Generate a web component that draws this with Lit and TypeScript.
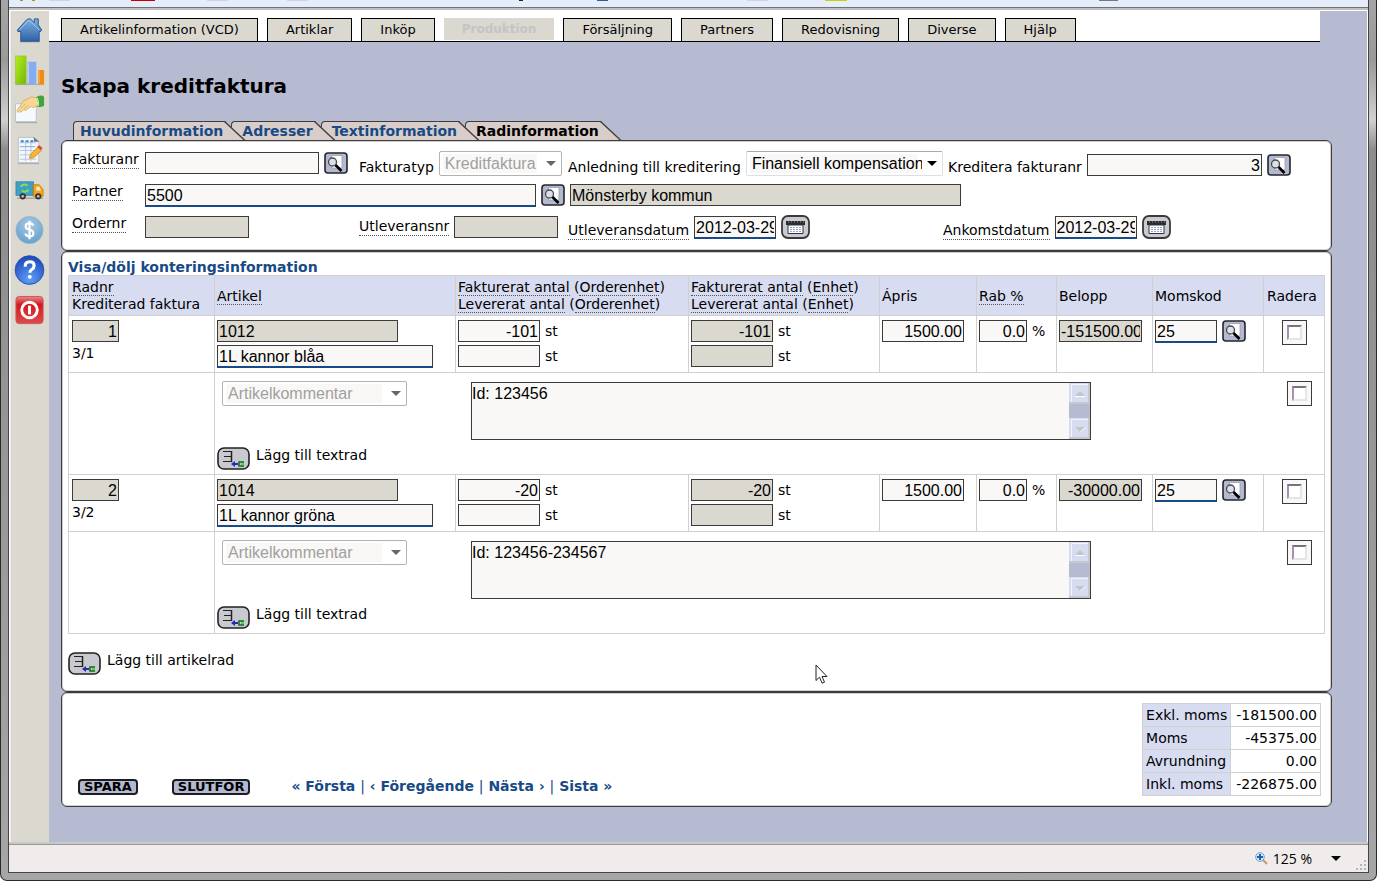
import { LitElement, html, svg, css, nothing } from "lit";
import { customElement, property } from "lit/decorators.js";

interface InvoiceRow {
  nr: string;
  ref: string;
  article: string;
  name: string;
  qty: string;
  price: string;
  discount: string;
  amount: string;
  vat: string;
  comment: string;
}

const ROWS: InvoiceRow[] = [
  { nr: "1", ref: "3/1", article: "1012", name: "1L kannor blåa", qty: "-101", price: "1500.00", discount: "0.0", amount: "-151500.00", vat: "25", comment: "Id: 123456" },
  { nr: "2", ref: "3/2", article: "1014", name: "1L kannor gröna", qty: "-20", price: "1500.00", discount: "0.0", amount: "-30000.00", vat: "25", comment: "Id: 123456-234567" },
];

const MENU = ["Artikelinformation (VCD)", "Artiklar", "Inköp", "Produktion", "Försäljning", "Partners", "Redovisning", "Diverse", "Hjälp"];
const TABS = ["Huvudinformation", "Adresser", "Textinformation", "Radinformation"];
const TOTALS = [
  ["Exkl. moms", "-181500.00"],
  ["Moms", "-45375.00"],
  ["Avrundning", "0.00"],
  ["Inkl. moms", "-226875.00"],
];

const SIDE_ICONS = [
  { label: "Hem", art: svg`
    <defs><linearGradient id="g" x1="0" y1="0" x2="0" y2="1"><stop offset="0" stop-color="#7fb0e0"/><stop offset="1" stop-color="#2f62a8"/></linearGradient></defs>
    <path d="M6 27.500h21" stroke="#a9a79f" stroke-width="1.500"/>
    <path d="M21 4h4v6l3.500 5.500-1 1.500H26v10H7V17H4l-.5-1.500L13 5l2-1h2l4 4z" fill="url(#g)" stroke="#265693" stroke-width="1"/>
    <path d="M5.500 15.500L14.500 6h2l9.500 9.500" fill="none" stroke="#a5cbee" stroke-width="1"/>` },
  { label: "Statistik", art: svg`
    <defs><linearGradient id="g" x1="0" y1="0" x2="1" y2="1"><stop offset="0" stop-color="#b4ee1c"/><stop offset="1" stop-color="#76b50c"/></linearGradient></defs>
    <path d="M2 30.500h29" stroke="#a9a79f"/>
    <rect x="1.500" y="1" width="11" height="29" fill="url(#g)" stroke="#8ac81a" stroke-width=".6"/>
    <rect x="14" y="7" width="9" height="23" fill="#86acf0"/><path d="M15 8v21" stroke="#b9d0fa"/>
    <rect x="25" y="15.500" width="6" height="14.500" fill="#f08a12"/><path d="M26 16v13" stroke="#fbb45a"/>` },
  { label: "Avtal", art: svg`
    <path d="M1.500 9h21.500v18.500H1.500z" fill="#f5f8fc" stroke="#b9c2cc"/>
    <path d="M2 28.500h22" stroke="#a3a6a6"/>
    <path d="M3 16l7-10 8-4 7 1 1 7-6 3-3-1-5 4-2-1-3 3-1-2-2 2z" fill="#f6d794" stroke="#d3a754" stroke-width=".8"/>
    <path d="M7 14l5-5M10 15l5-5" stroke="#d3a754" stroke-width=".8"/>
    <path d="M23 2q6-3 8 0v9q-3 2-7 1 2-4-1-10z" fill="#3fa53b"/><path d="M24 3q2 4 1 8.500" stroke="#d8f3d4" fill="none"/>` },
  { label: "Planering", art: svg`
    <path d="M4.500 2.500h17l4 4v22h-21z" fill="#f3f6fa" stroke="#bcc3cb"/><path d="M4 29.500h22" stroke="#a5a8a8"/>
    <path d="M20 2l6 5h-5z" fill="#666f78"/>
    <path d="M6 8h17M6 16h17M6 20.500h17M6 25h17M12 6v21M17.500 6v21" stroke="#b4c9e0"/>
    <path d="M7 6.500h15" stroke="#3f86c6" stroke-width="2" stroke-dasharray="3 2"/>
    <path d="M6 12h16" stroke="#7fabd4" stroke-width="1"/>
    <path d="M16 24l1-4 8-8 3.500 3.500-8 8z" fill="#f8b435" stroke="#c98212" stroke-width=".8"/>
    <path d="M24 12.500l2-2 3.500 3-2 2z" fill="#d9443a"/>` },
  { label: "Leverans", art: svg`
    <path d="M3 24h27" stroke="#aaa89f" stroke-width="1.500"/>
    <path d="M2 7h18v14H2z" fill="#3fa0c6" stroke="#2a7fa4" stroke-width=".8"/>
    <path d="M20 10h6l4 5v7H20z" fill="#f5a516" stroke="#c47b06" stroke-width=".8"/><path d="M23 12h3l2 4h-5z" fill="#f9ecc6"/>
    <path d="M7 12q3-4 7-1M15 15q-3 4-7 1" stroke="#86e04a" stroke-width="2" fill="none"/>
    <circle cx="9" cy="22" r="3.200" fill="#333"/><circle cx="9" cy="22" r="1.400" fill="#bbb"/>
    <circle cx="25" cy="22" r="3.200" fill="#333"/><circle cx="25" cy="22" r="1.400" fill="#bbb"/>` },
  { label: "Ekonomi", art: svg`
    <defs><radialGradient id="g" cx=".5" cy=".3" r=".8"><stop offset="0" stop-color="#a8c9e2"/><stop offset="1" stop-color="#5f9bc9"/></radialGradient></defs>
    <circle cx="16" cy="15.500" r="14" fill="url(#g)" stroke="#8db5d4" stroke-width=".8"/>
    <path d="M20 11q-1-2.500-4-2.500-4 0-4 3.200 0 2.800 4 3.500t4 3.800q0 3-4 3-3.600 0-4.300-3M16 6v19" stroke="#fff" stroke-width="2.200" fill="none"/>` },
  { label: "Hjälp", art: svg`
    <defs><radialGradient id="g" cx=".5" cy=".8" r=".8"><stop offset="0" stop-color="#5fa0f8"/><stop offset="1" stop-color="#1a45b8"/></radialGradient></defs>
    <circle cx="16" cy="15.500" r="14.800" fill="url(#g)" stroke="#2a54b0" stroke-width="1"/>
    <path d="M11.500 12q0-5 4.700-5 4.500 0 4.500 4 0 2.500-2.400 4-1.900 1.200-1.900 3.200" stroke="#fff" stroke-width="3.200" fill="none"/><circle cx="16.300" cy="22.500" r="2" fill="#fff"/>` },
  { label: "Logga ut", art: svg`
    <defs><linearGradient id="g" x1="0" y1="0" x2="0" y2="1"><stop offset="0" stop-color="#e88"/><stop offset=".3" stop-color="#cf1a20"/><stop offset="1" stop-color="#e04a4a"/></linearGradient></defs>
    <rect x="2" y="1.500" width="28" height="28" rx="3.500" fill="url(#g)" stroke="#c9555a"/>
    <circle cx="16" cy="15.500" r="8" fill="none" stroke="#fff" stroke-width="3"/><path d="M16 11v9" stroke="#fff" stroke-width="3"/>` },
];

const controls = css`
  button { padding: 0; border: 0; background: none; display: block; flex: none; cursor: pointer; font: inherit; }
  svg { display: block; }
  input, select, textarea { font: 16px/20px "Liberation Sans", Arial, sans-serif; color: #000; margin: 0; box-sizing: border-box; border-radius: 0; min-width: 0; }
  .field { height: 22px; border: 1px solid #3b3b3b; background: #f9f8f6; padding: 2px 1px 0; flex: none; }
  .field[readonly] { background: #dbd8d0; }
  .field.required { height: 23px; border-bottom: 2px solid #184a86; }
  .num { text-align: right; }
  .picker { appearance: none; height: 25px; flex: none; padding: 0 20px 0 5px; border: 1px solid #dcdfe6; border-top-color: #a8abb0; border-radius: 2px; opacity: 1;
    background: url("data:image/svg+xml,%3Csvg xmlns='http://www.w3.org/2000/svg' width='10' height='5'%3E%3Cpath d='M0 0h10L5 5z' fill='black'/%3E%3C/svg%3E") no-repeat right 5px center, linear-gradient(#f9f8f6, #f9f8f6) no-repeat 3px 2px / calc(100% - 27px) 19px, #fff; }
  .picker:disabled { color: #a0a0a0; border-color: #b2b2b2;
    background-image: url("data:image/svg+xml,%3Csvg xmlns='http://www.w3.org/2000/svg' width='10' height='5'%3E%3Cpath d='M0 0h10L5 5z' fill='%23666'/%3E%3C/svg%3E"), linear-gradient(#f9f8f6, #f9f8f6); }
  .term { border-bottom: 1px dotted #555; }
`;

@customElement("icon-button")
class IconButton extends LitElement {
  @property() kind = "search";
  @property() label = "";
  static styles = [controls, css`:host { display: block; flex: none; }`];

  private art() {
    switch (this.kind) {
      case "calendar":
        return html`<svg width="29" height="24" viewBox="0 0 29 24">
          <rect x="1" y="1" width="27" height="22" rx="6" fill="#c9cbd0" stroke="#3a3a3a" stroke-width="1.800"/>
          <path d="M5 6h19v4H5z" fill="#2c2c30"/><path d="M7 7h16" stroke="#999" stroke-dasharray="1 2"/>
          <path d="M7 10h15v8.500H7z" fill="#fff" stroke="#33343a"/>
          <path d="M9 12.500h11M9 14.500h11M9 16.500h11" stroke="#8fa6d4" stroke-dasharray="2 1"/>
        </svg>`;
      case "add":
        return html`<svg width="33" height="23" viewBox="0 0 33 23">
          <rect x="1" y="1" width="31" height="21" rx="6" fill="#c9cacf" stroke="#222" stroke-width="1.600"/>
          <path d="M6 4.500h9M7 9.500h8M6 14.500h9" stroke="#222" fill="none"/>
          <path d="M14.500 4v11" stroke="#222" stroke-width="1.500"/>
          <path d="M14 17l4-3v2h3v2h-3v2z" fill="#2a2ab8"/>
          <path d="M27 15h-5v4h5" stroke="#116a1a" stroke-width="1.500" fill="none"/><path d="M24 17h3" stroke="#3fe04a" stroke-width="2"/>
        </svg>`;
      default:
        return html`<svg width="24" height="22" viewBox="0 0 24 22">
          <rect x="1" y="1" width="22" height="20" rx="3" fill="#b3b9cf" stroke="#25252c" stroke-width="1.600"/>
          <path d="M7.500 3.500h10.500v12.500H7.500z" fill="#fff" stroke="#9b9eac" stroke-width=".8"/>
          <circle cx="8.500" cy="10" r="4" fill="#dcdfe8" stroke="#4a4a50" stroke-width="1.300"/>
          <path d="M11.500 13l6 6" stroke="#000" stroke-width="2.600"/>
        </svg>`;
    }
  }

  render() {
    return html`<button type="button" aria-label=${this.label}>${this.art()}</button>`;
  }
}

@customElement("side-bar")
class SideBar extends LitElement {
  static styles = [controls, css`
    :host { display: block; flex: none; width: 38px; padding-left: 2px; background: linear-gradient(90deg, #fff 1px, #dbd8d0 2px); }
    .link { display: flex; align-items: center; height: 40px; }
  `];
  render() {
    return SIDE_ICONS.map((i, n) => html`
      <a class="link" href="#" aria-label=${i.label}><side-icon .index=${n}></side-icon></a>`);
  }
}

@customElement("side-icon")
class SideIcon extends LitElement {
  @property({ type: Number }) index = 0;
  static styles = css`:host { display: block; } svg { display: block; margin-left: 3px; }`;
  render() {
    return html`<svg width="32" height="32" viewBox="0 0 33 33">${SIDE_ICONS[this.index].art}</svg>`;
  }
}

@customElement("invoice-form")
class InvoiceForm extends LitElement {
  static styles = [controls, css`
    :host { display: grid; grid-template-columns: 73px 214px 209px 375px 1fr; row-gap: 6px; }
    .cell { display: flex; align-items: center; height: 26px; white-space: nowrap; }
    .low { align-items: flex-end; }
    .low label { margin-right: 5px; }
    .wide { grid-column: span 4; }
    .name { align-items: flex-start; padding-top: 1px; height: 25px; }
    .gap { margin-left: 5px; }
    .drop { align-self: flex-end; }
    .search { width: 174px; }
    .partner { width: 391px; }
    .order { width: 104px; }
    .date { width: 82px; }
    .reason { width: 197px; }
    .type { width: 123px; }
    .credit { width: 175px; }
    .indent { padding-left: 5px; }
  `];
  render() {
    return html`
      <div class="cell name"><label class="term" for="nr">Fakturanr</label></div>
      <div class="cell"><input id="nr" class="field search"><icon-button class="gap" label="Sök faktura"></icon-button></div>
      <div class="cell low"><label for="type">Fakturatyp</label><select id="type" class="picker type" disabled><option>Kreditfaktura</option></select></div>
      <div class="cell low"><label for="reason">Anledning till kreditering</label><select id="reason" class="picker reason"><option>Finansiell kompensation</option></select></div>
      <div class="cell low indent"><label for="credit">Kreditera fakturanr</label><input id="credit" class="field num credit" value="3"><icon-button class="gap" label="Sök kreditfaktura"></icon-button></div>

      <div class="cell name"><label class="term" for="partner">Partner</label></div>
      <div class="cell wide"><input id="partner" class="field required partner" value="5500"><icon-button class="gap" label="Sök partner"></icon-button><input class="field gap partner" readonly aria-label="Partnernamn" value="Mönsterby kommun"></div>

      <div class="cell name"><label class="term" for="order">Ordernr</label></div>
      <div class="cell"><input id="order" class="field order" readonly></div>
      <div class="cell"><label class="term" for="deliv">Utleveransnr</label><input id="deliv" class="field gap order" readonly></div>
      <div class="cell"><label class="term drop" for="ddate">Utleveransdatum</label><input id="ddate" class="field required gap date" value="2012-03-29"><icon-button class="gap" kind="calendar" label="Välj utleveransdatum"></icon-button></div>
      <div class="cell"><label class="term drop" for="adate">Ankomstdatum</label><input id="adate" class="field required gap date" value="2012-03-29"><icon-button class="gap" kind="calendar" label="Välj ankomstdatum"></icon-button></div>
    `;
  }
}

@customElement("invoice-lines")
class InvoiceLines extends LitElement {
  static styles = [controls, css`
    :host { display: block; }
    .lines { border-collapse: collapse; table-layout: fixed; width: 100%; }
    th, td { border: 1px solid #d0d0d0; padding: 4px 2px; text-align: left; vertical-align: top; font-weight: normal; white-space: nowrap; }
    th { background: #d7dcf1; vertical-align: middle; padding: 3px 2px 2px; height: 34px; }
    th:first-child, td:first-child, th:last-child { padding-left: 3px; }
    .c1 { width: 146px; } .c2 { width: 241px; } .c3 { width: 233px; } .c4 { width: 191px; } .c5 { width: 97px; }
    .c6 { width: 80px; } .c7 { width: 96px; } .c8 { width: 111px; } .c9 { width: 61px; }
    .stack { display: flex; flex-direction: column; gap: 3px; }
    .pair { display: flex; align-items: center; gap: 5px; height: 22px; }
    .item { height: 48px; }
    .w-nr { width: 47px; } .w-art { width: 181px; } .w-name { width: 216px; } .w-qty { width: 82px; }
    .w-disc { width: 48px; } .w-sum { width: 83px; } .w-vat { width: 62px; }
    .tick { appearance: none; display: grid; place-items: center; width: 25px; height: 25px; border: 1px solid #3b3b3b; background: #f9f8f6; }
    .tick::before { content: ""; width: 15px; height: 15px; box-sizing: border-box; background: #fff; border: 2px solid #e6e4e8; border-top-color: #77737c; border-left-color: #a592b0; }
    .center { display: flex; justify-content: center; }
    .note { display: grid; grid-template-columns: 254px minmax(0, 620px) 1fr; grid-template-rows: 66px auto; padding: 4px 10px 0 0; }
    .note .picker { width: 185px; margin-left: 5px; }
    .note .tick { justify-self: end; }
    .memo { display: flex; height: 58px; margin-top: 1px; border: 1px solid #3b3b3b; background: #f9f8f6; box-sizing: border-box; }
    .memo textarea { flex: 1; border: 0; padding: 1px 0 0; background: none; resize: none; overflow: hidden; outline: none; }
    .add { display: flex; gap: 6px; align-items: flex-start; }
    .foot { margin-top: 18px; }
    .toggle { display: block; line-height: 16px; color: #184a86; font-weight: bold; text-decoration: none; }
  `];

  private scroller() {
    return html`<svg width="21" height="56" viewBox="0 0 21 56" aria-hidden="true">
      <path d="M0 0h21v56H0z" fill="#b6bbd2"/>
      <path d="M0 0h21v21H0zM0 35h21v21H0z" fill="#c5c9cc"/>
      <path d="M0 0h19v19H0zM0 35h19v19H0z" fill="#d7dcf1"/>
      <path d="M2.500 19V1.500H19M2.500 54V36.500H19" stroke="#f2f4fc" fill="none"/>
      <path d="M6 13l5-5 5 5zM6 44h10l-5 5z" fill="#c3c6c8"/>
      <path d="M6 13.500h10M11.500 49l4.500-4.500" stroke="#fff"/>
    </svg>`;
  }

  private qty(r: InvoiceRow, unit: string, locked: boolean) {
    return html`<div class="stack">
      <div class="pair"><input class="field num w-qty" ?readonly=${locked} aria-label="Fakturerat antal ${unit}" value=${r.qty}><span>st</span></div>
      <div class="pair"><input class="field num w-qty" ?readonly=${locked} aria-label="Levererat antal ${unit}"><span>st</span></div>
    </div>`;
  }

  private row(r: InvoiceRow) {
    return html`
      <tr>
        <td><div class="stack item"><input class="field num w-nr" readonly aria-label="Radnr" value=${r.nr}><span>${r.ref}</span></div></td>
        <td><div class="stack"><input class="field w-art" readonly aria-label="Artikel" value=${r.article}><input class="field required w-name" aria-label="Artikelnamn" value=${r.name}></div></td>
        <td>${this.qty(r, "orderenhet", false)}</td>
        <td>${this.qty(r, "enhet", true)}</td>
        <td><input class="field num w-qty" aria-label="Ápris" value=${r.price}></td>
        <td><div class="pair"><input class="field num w-disc" aria-label="Rabatt" value=${r.discount}><span>%</span></div></td>
        <td><input class="field num w-sum" readonly aria-label="Belopp" value=${r.amount}></td>
        <td><div class="pair"><input class="field required w-vat" aria-label="Momskod" value=${r.vat}><icon-button label="Sök momskod"></icon-button></div></td>
        <td><div class="center"><input type="checkbox" class="tick" aria-label="Radera rad ${r.nr}"></div></td>
      </tr>
      <tr>
        <td></td>
        <td colspan="8"><div class="note">
          <select class="picker" disabled aria-label="Texttyp"><option>Artikelkommentar</option></select>
          <div class="memo"><textarea aria-label="Kommentar" .value=${r.comment}></textarea>${this.scroller()}</div>
          <input type="checkbox" class="tick" aria-label="Radera text ${r.nr}">
          <div class="add"><icon-button kind="add" label="Lägg till textrad"></icon-button><span>Lägg till textrad</span></div>
        </div></td>
      </tr>`;
  }

  private term(unit: string) {
    return html`<span class="term">Fakturerat antal</span> (<span class="term">${unit}</span>)<br><span class="term">Levererat antal</span> (<span class="term">${unit}</span>)`;
  }

  render() {
    return html`
      <a class="toggle" href="#">Visa/dölj konteringsinformation</a>
      <table class="lines">
        <colgroup>${[1, 2, 3, 4, 5, 6, 7, 8, 9].map((n) => html`<col class="c${n}">`)}</colgroup>
        <thead><tr>
          <th><span class="term">Radnr</span><br>Krediterad faktura</th>
          <th><span class="term">Artikel</span></th>
          <th>${this.term("Orderenhet")}</th>
          <th>${this.term("Enhet")}</th>
          <th>Ápris</th><th><span class="term">Rab %</span></th><th>Belopp</th><th>Momskod</th><th>Radera</th>
        </tr></thead>
        <tbody>${ROWS.map((r) => this.row(r))}</tbody>
      </table>
      <div class="add foot"><icon-button kind="add" label="Lägg till artikelrad"></icon-button><span>Lägg till artikelrad</span></div>`;
  }
}

@customElement("app-root")
class AppRoot extends LitElement {
  static styles = [controls, css`
    :host { display: block; font: 14px/17px "DejaVu Sans", Verdana, sans-serif; color: #000; }
    .frame { position: relative; box-sizing: border-box; min-height: 100vh; display: flex; padding: 0 7px 7px; border: 1px solid #2a2a2a; border-top: 0; border-radius: 0 0 7px 7px;
      background: linear-gradient(#a5a5a5 0, #9a9a9a 60px, #d0d0d0 120px, #8c8c8c 150px, #a6a6a6 100%); }
    .window { flex: 1; min-width: 0; display: flex; flex-direction: column; border: 1px solid #444; border-top: 0; background: #fff; }
    .strip { height: 7px; background: #e6edfa; border-bottom: 1px solid #6f7378; overflow: hidden; }
    .ledge { height: 3px; background: linear-gradient(#bfbfbf 2px, #fff 2px); }
    .body { flex: 1; display: flex; }
    .main { flex: 1; min-width: 0; background: #b6bbd2; margin-right: 1px; }
    .menu { display: flex; gap: 9px; align-items: flex-end; height: 30px; margin-right: 47px; padding-left: 12px; background: #fff; border-bottom: 1px solid #000; }
    .menu a { box-sizing: border-box; height: 23px; padding: 2px 18px 0; border: 1px solid #000; border-bottom: 0; background: #dbd8d0; color: #000; text-decoration: none; font-size: 13px; line-height: 18px; }
    .menu .off { height: 22px; padding: 1px 17px 0; margin-bottom: 1px; border-color: #dbd8d0; color: #c4c4c4; font-size: 12px; font-weight: bold; }
    .page { padding: 0 35px 32px 12px; }
    h1 { margin: 0; padding: 32px 0 22px; font-size: 20px; line-height: 25px; font-weight: bold; }
    .tabs { display: flex; padding-left: 12px; height: 19px; }
    .tab { position: relative; box-sizing: border-box; margin-right: 7px; padding: 1px 1px 0 10px; border: solid #3c3c3c; border-width: 1px 0 0 1px; border-radius: 4px 0 0 0; background: #d8cdc8; color: #184a86; font-weight: bold; text-decoration: none; }
    .tab:first-child { padding-left: 6px; z-index: 4; }
    .tab:nth-child(2) { z-index: 3; }
    .tab:nth-child(3) { z-index: 2; }
    .tab:last-child { color: #000; z-index: 1; }
    .tab::after { content: ""; position: absolute; top: -1px; right: -1px; width: 20px; height: 18px; border: solid #3c3c3c; border-width: 1px 2px 0 0; background: #d8cdc8; transform: skewX(47deg); transform-origin: 100% 0; z-index: -1; }
    .panel { background: #fff; border: 1px solid #3c3c3c; border-radius: 6px; box-shadow: inset 0 0 0 1px #cfcfcf; }
    .head { padding: 9px 10px 10px; }
    .grid { padding: 7px 6px 16px; }
    .summary { display: flex; align-items: flex-end; padding: 10px 10px 10px 16px; }
    .cta { height: 16px; box-sizing: border-box; border: 2px solid #1c1c22; border-radius: 4px; background: #b3b9cf; padding: 0 4px; font-weight: bold; font-size: 13px; line-height: 12px; margin: 0 34px 1px 0; }
    .pager { margin: 0 auto 1px 7px; color: #184a86; font-weight: bold; white-space: pre; }
    .pager a { color: inherit; text-decoration: none; }
    .bar { font-weight: normal; }
    .totals { border-collapse: collapse; }
    .totals th, .totals td { border: 1px solid #d0d0d0; padding: 3px 3px 2px; font-weight: normal; text-align: left; }
    .totals th { background: #d7dcf1; }
    .totals td { text-align: right; padding-left: 5px; }
    .status { height: 27px; display: flex; align-items: center; justify-content: flex-end; gap: 5px; background: #f0eceb; border-top: 1px solid #999; box-shadow: 0 -2px #c8c8c8; position: relative; font-family: "Open Sans", sans-serif; }
    .zoom { display: flex; align-items: center; gap: 5px; }
    .caret { margin: 0 9px 0 14px; }
    .grip { align-self: flex-end; }
    .cursor { position: absolute; left: 814px; top: 664px; }
  `];

  render() {
    return html`<div class="frame">
      <div class="window">
        <div class="strip"><svg width="1359" height="7" aria-hidden="true">
          <path d="M11 0h3v1h-3zM23 0h3v1h-3z" fill="#c08a20"/>
          <path d="M40 0h21v1H40zM198 0h21v1h-21zM278 0h21v1h-21zM738 0h21v1h-21z" fill="#cfd4e0"/>
          <path d="M122 0h24v1h-24z" fill="#c00"/><path d="M510 0h4v1h-4z" fill="#222"/>
          <path d="M588 0h11v1h-11z" fill="#335a8c"/><path d="M816 0h22v1h-22z" fill="#c8d200"/><path d="M1090 0h19v1h-19z" fill="#777"/>
        </svg></div>
        <div class="ledge"></div>
        <div class="body">
          <side-bar></side-bar>
          <div class="main">
            <nav class="menu">${MENU.map((m) => html`<a class=${m === "Produktion" ? "off" : nothing} href="#">${m}</a>`)}</nav>
            <div class="page">
              <h1>Skapa kreditfaktura</h1>
              <nav class="tabs">${TABS.map((t) => html`<a class="tab" href="#">${t}</a>`)}</nav>
              <section class="panel head"><invoice-form></invoice-form></section>
              <section class="panel grid"><invoice-lines></invoice-lines></section>
              <section class="panel summary">
                <button class="cta">SPARA</button>
                <button class="cta">SLUTFÖR</button>
                <div class="pager"><a href="#">« Första</a> <span class="bar">|</span> <a href="#">‹ Föregående</a> <span class="bar">|</span> <a href="#">Nästa ›</a> <span class="bar">|</span> <a href="#">Sista »</a></div>
                <table class="totals">${TOTALS.map(([k, v]) => html`<tr><th>${k}</th><td>${v}</td></tr>`)}</table>
              </section>
            </div>
          </div>
        </div>
        <div class="status">
          <div class="zoom"><svg width="13" height="13" viewBox="0 0 13 13"><path d="M8 8l4 4" stroke="#c09a6a" stroke-width="2"/><circle cx="5" cy="5" r="4.300" fill="#d7ecfb" stroke="#7b9cc0"/><path d="M5 2v6M2 5h6" stroke="#1b62b8" stroke-width="2"/></svg><span>125 %</span></div>
          <svg class="caret" width="10" height="5"><path d="M0 0h10L5 5z"/></svg>
          <svg class="grip" width="13" height="13"><path d="M9 1h2v2H9zM5 5h2v2H5zM9 5h2v2H9zM1 9h2v2H1zM5 9h2v2H5zM9 9h2v2H9z" fill="#b8b5b4"/></svg>
        </div>
      </div>
      <svg class="cursor" width="13" height="21" viewBox="0 0 13 21" aria-hidden="true"><path d="M1 1v15.500l3.500-3.300 2.600 6 2.400-1-2.500-5.700H12z" fill="#fff" stroke="#222"/></svg>
    </div>`;
  }
}
